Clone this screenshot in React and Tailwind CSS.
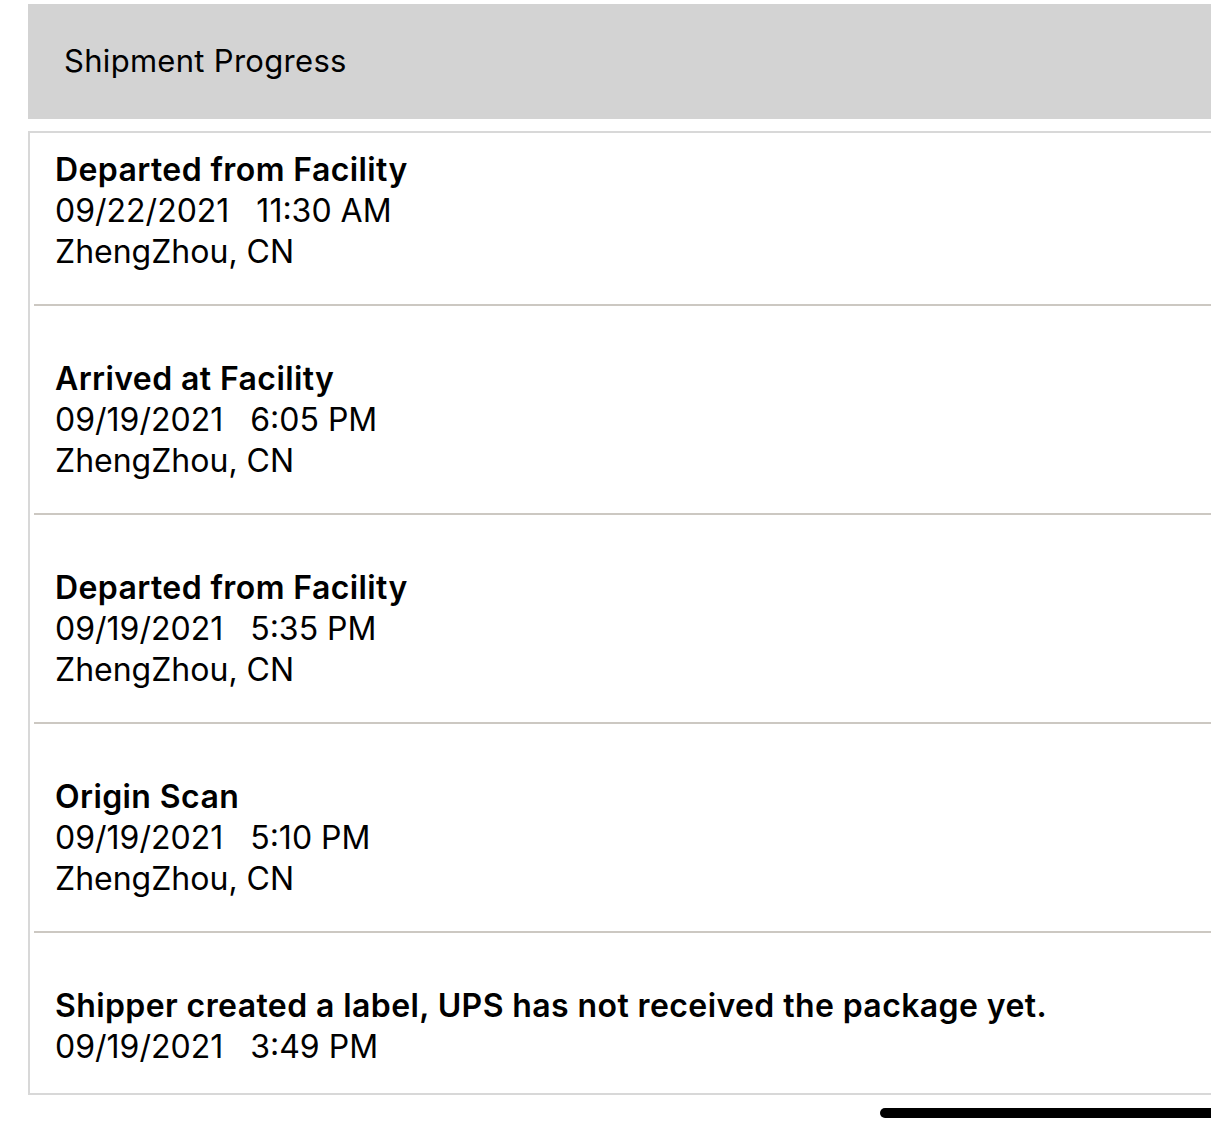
const events = [
  { title: 'Departed from Facility', date: '09/22/2021', time: '11:30 AM', place: 'ZhengZhou, CN', pad: 'pt-[16px] pb-[32px]' },
  { title: 'Arrived at Facility', date: '09/19/2021', time: '6:05 PM', place: 'ZhengZhou, CN', pad: 'pt-[52px] pb-[32px]' },
  { title: 'Departed from Facility', date: '09/19/2021', time: '5:35 PM', place: 'ZhengZhou, CN', pad: 'pt-[52px] pb-[32px]' },
  { title: 'Origin Scan', date: '09/19/2021', time: '5:10 PM', place: 'ZhengZhou, CN', pad: 'pt-[52px] pb-[32px]' },
  { title: 'Shipper created a label, UPS has not received the package yet.', date: '09/19/2021', time: '3:49 PM', pad: 'pt-[52px] pb-[26px]' },
];

export default function App() {
  return (
    <div
      className="h-[1134px] w-full overflow-hidden bg-white pl-[28px] pt-[4px] text-black"
      style={{ fontFamily: 'Inter, "Liberation Sans", sans-serif' }}
    >
      <div className="flex h-[115px] items-center bg-[#d3d3d3] pl-[36px] text-[31px] tracking-[0.3px]">
        Shipment Progress
      </div>

      <div className="mt-[12px] border-2 border-r-0 border-[#d8d8d8] pl-[4px]">
        {events.map((e, i) => (
          <div
            key={i}
            className={[
              'pl-[21px] text-[32px] leading-[41px]',
              e.pad,
              i < events.length - 1 ? 'border-b-2 border-[#ccc8c2]' : '',
            ].join(' ')}
          >
            <div className="font-semibold tracking-[0.4px]">{e.title}</div>
            <div className="whitespace-pre">
              {e.date}   {e.time}
            </div>
            {e.place && <div>{e.place}</div>}
          </div>
        ))}
      </div>

      <div className="mt-[13px] ml-[852px] h-[10px] rounded-l-full bg-black" />
    </div>
  );
}
